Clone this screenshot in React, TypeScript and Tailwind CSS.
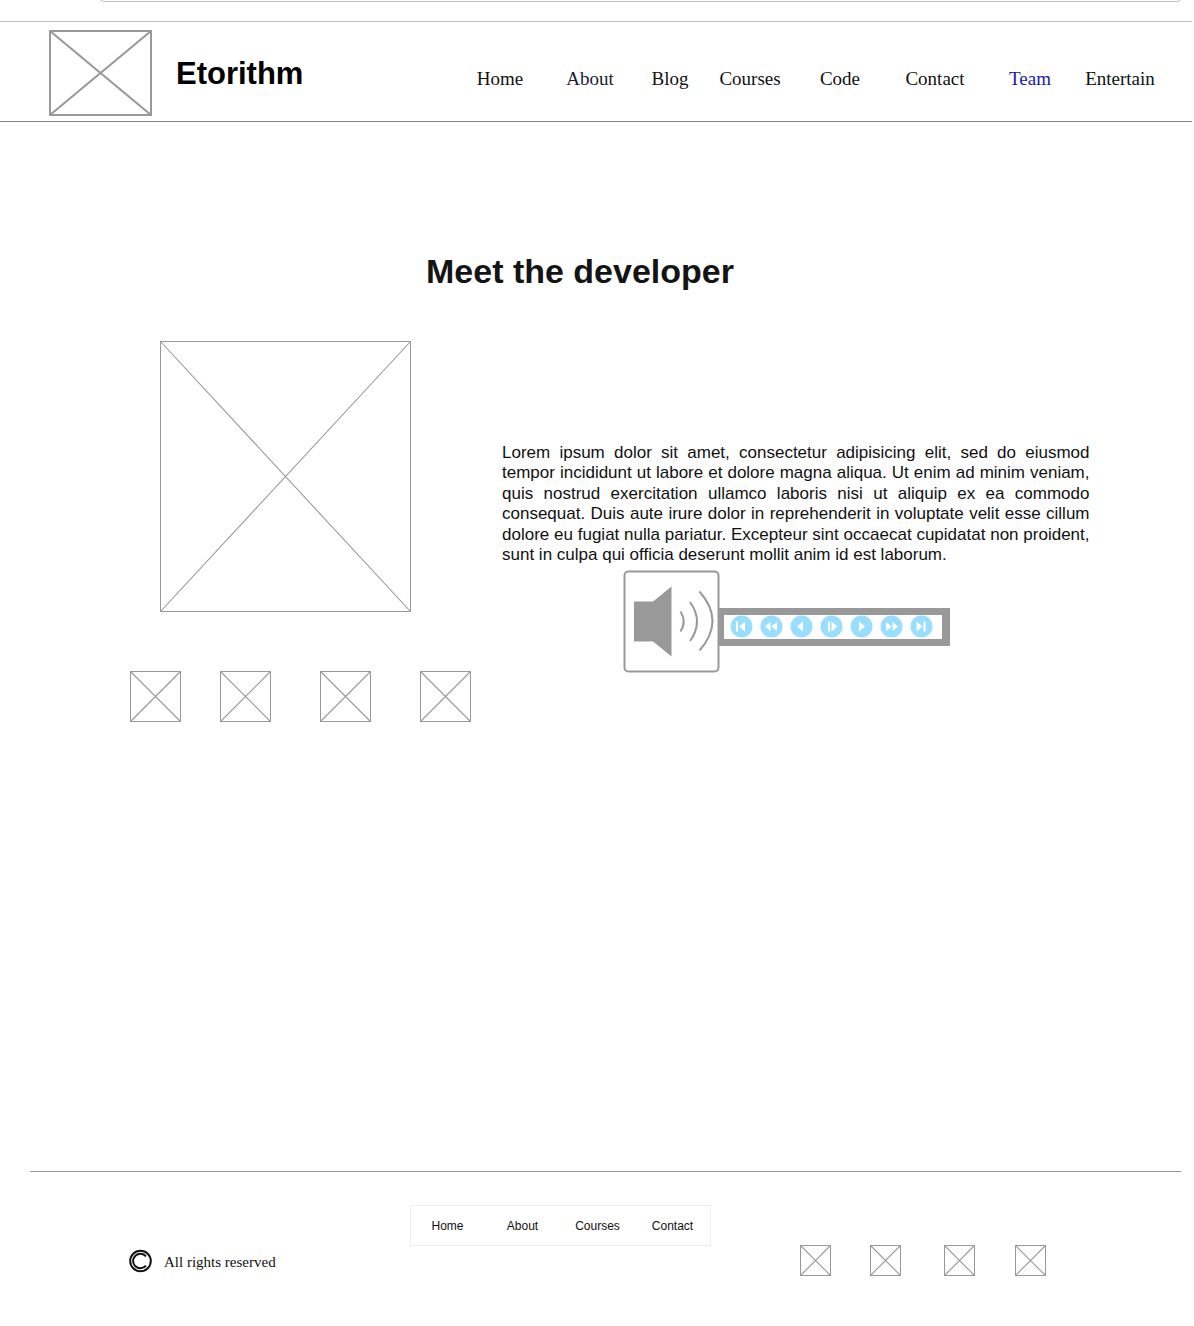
import React from "react";

const SANS = "font-['Liberation_Sans',Arial,sans-serif]";
const SERIF = "font-['Liberation_Serif','Times_New_Roman',serif]";

function Placeholder({ w, h, stroke = 1, className = "" }: { w: number; h: number; stroke?: number; className?: string }) {
  const o = stroke / 2;
  return (
    <svg width={w} height={h} viewBox={`0 0 ${w} ${h}`} fill="none" stroke="#999999" strokeWidth={stroke} className={`block shrink-0 ${className}`}>
      <rect x={o} y={o} width={w - stroke} height={h - stroke} />
      <path d={`M${o} ${o}L${w - o} ${h - o}M${o} ${h - o}L${w - o} ${o}`} strokeWidth={stroke + 0.1} />
    </svg>
  );
}

const NAV = [
  { label: "Home", cls: "w-[90px] text-[#111]" },
  { label: "About", cls: "w-[90px] text-[#1c1c30]" },
  { label: "Blog", cls: "w-[70px] text-[#111]" },
  { label: "Courses", cls: "w-[90px] text-[#111]" },
  { label: "Code", cls: "w-[90px] text-[#111]" },
  { label: "Contact", cls: "w-[100px] text-[#111]" },
  { label: "Team", cls: "w-[90px] text-[#1a1aa6]" },
  { label: "Entertain", cls: "w-[90px] text-[#111]" },
];

const CONTROLS = [
  "M6 6.500h2v10h-2zM15 6.500v10l-6-5z",
  "M10.500 7v9l-5.500-4.500zM17 7v9l-5.500-4.500z",
  "M13 6.500v10l-6-5z",
  "M8 6.500h2v10h-2zM11.500 6.500v10l6-5z",
  "M9 6.500v10l6-5z",
  "M6 7v9l5.500-4.500zM12.500 7v9l5.500-4.500z",
  "M6.500 6.500v10l6-5zM13.500 6.500h2v10h-2z",
];

function Speaker() {
  return (
    <svg width="96" height="102" viewBox="0 0 96 102" fill="none" stroke="#999999" strokeWidth="2" className="relative block shrink-0 overflow-visible">
      <rect x="1.500" y="1.500" width="94" height="100" rx="4" fill="#fff" />
      <path d="M11 31.500h19L48.500 16.500v70L30 71.500H11z" fill="#999999" stroke="none" />
      <path d="M57.500 41.500q6.500 10 0 20M67 32q14 19.500 0 39M76.500 21.500q26 29.500 0 59" />
    </svg>
  );
}

export default function App() {
  return (
    <div className={`h-[1326px] w-[1194px] overflow-hidden bg-white ${SANS}`}>
      <div className="h-[21px] overflow-hidden">
        <div className="-mt-2 ml-[100px] h-[10px] w-[1081px] rounded-b-[4px] border border-t-0 border-[#c0c0c0]" />
      </div>
      <header className="flex h-[101px] w-[1192px] border-t border-b border-t-[#c0c0c0] border-b-[#808080]">
        <Placeholder w={103} h={86} stroke={2} className="mt-[8px] ml-[49px]" />
        <h1 className="mt-[34px] ml-[24px] w-[279px] text-[31px] leading-[36px] font-bold text-black">Etorithm</h1>
        <nav className={`mt-[46px] flex text-center text-[19px] leading-[22px] ${SERIF}`}>
          {NAV.map((n) => (
            <a key={n.label} className={n.cls}>{n.label}</a>
          ))}
        </nav>
      </header>

      <main className="h-[1049px]">
        <h2 className="ml-[400px] w-[360px] pt-[129px] text-center text-[34px] leading-[40px] font-bold text-[#141414]">Meet the developer</h2>
        <div className="flex pt-[50px]">
          <div className="w-[502px]">
            <Placeholder w={251} h={271} className="ml-[160px]" />
            <div className="mt-[59px] ml-[130px] flex">
              <Placeholder w={51} h={51} />
              <Placeholder w={51} h={51} className="ml-[39px]" />
              <Placeholder w={51} h={51} className="ml-[49px]" />
              <Placeholder w={51} h={51} className="ml-[49px]" />
            </div>
          </div>
          <div className="w-[587.500px] pt-[102px]">
            <p className="h-[127px] text-justify text-[17px] leading-[20.400px] text-[#111]">
              Lorem ipsum dolor sit amet, consectetur adipisicing elit, sed do eiusmod tempor incididunt ut labore et dolore magna aliqua. Ut enim ad minim veniam, quis nostrud exercitation ullamco laboris nisi ut aliquip ex ea commodo consequat. Duis aute irure dolor in reprehenderit in voluptate velit esse cillum dolore eu fugiat nulla pariatur. Excepteur sint occaecat cupidatat non proident, sunt in culpa qui officia deserunt mollit anim id est laborum.
            </p>
            <div className="ml-[121px] flex">
              <Speaker />
              <div className="mt-[38px] flex h-[38px] w-[231px] gap-[7px] border-[7px] border-r-[8px] border-l-[5px] border-[#999999] bg-white pl-[6px]">
                {CONTROLS.map((d) => (
                  <svg key={d} width="23" height="24" viewBox="0 0 23 24" className="block shrink-0">
                    <circle cx="11.500" cy="11.500" r="11" fill="#99DDFF" />
                    <path d={d} fill="#fff" />
                  </svg>
                ))}
              </div>
            </div>
          </div>
        </div>
      </main>

      <footer className="ml-[30px] flex w-[1151px] border-t border-[#999999]">
        <div className="mt-[77px] ml-[99px] flex w-[281px] items-center self-start">
          <svg width="24" height="24" viewBox="0 0 24 24" fill="none" stroke="#111" className="block">
            <circle cx="11.500" cy="12" r="10.300" strokeWidth="2" />
            <path d="M17 7.300A7.300 7.300 0 1 0 17 16.700" strokeWidth="2" />
          </svg>
          <span className={`mt-[2px] ml-[11px] text-[15px] leading-[18px] text-[#111] ${SERIF}`}>All rights reserved</span>
        </div>
        <div className="mt-[33px] flex h-[41px] w-[301px] border border-[#eeeeee] text-center text-[12px] leading-[41px] text-[#111]">
          {["Home", "About", "Courses", "Contact"].map((t) => (
            <a key={t} className="w-[75px] shrink-0 pr-[2px]">{t}</a>
          ))}
        </div>
        <div className="mt-[73px] ml-[89px] flex">
          <Placeholder w={31} h={31} />
          <Placeholder w={31} h={31} className="ml-[39px]" />
          <Placeholder w={31} h={31} className="ml-[43px]" />
          <Placeholder w={31} h={31} className="ml-[40px]" />
        </div>
      </footer>
    </div>
  );
}
